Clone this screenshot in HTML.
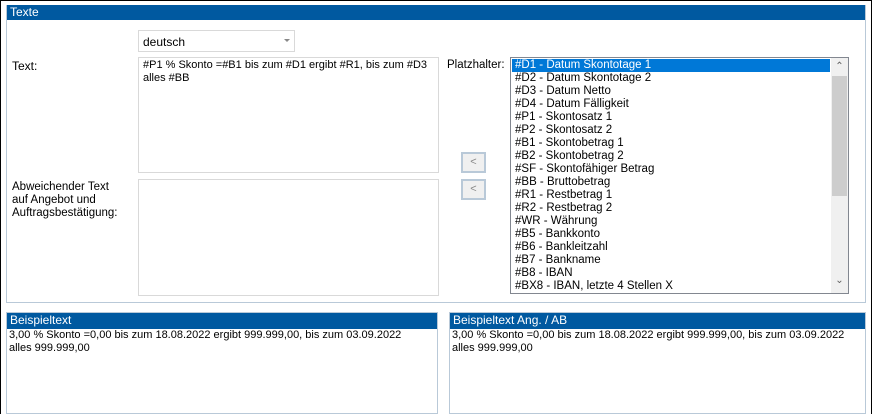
<!DOCTYPE html>
<html><head><style>
*{margin:0;padding:0;box-sizing:border-box}
body{width:872px;height:414px;background:#fff;font-family:"Liberation Sans",sans-serif;font-size:11px;color:#000;position:relative;overflow:hidden}
.a{position:absolute}
.hdr{background:#0059a0;color:#fff;padding-left:3px;line-height:15px;font-size:12px}
.box{border:1px solid #d9d9d9;background:#fff}
.li{height:13px;line-height:13px;padding-left:3px;white-space:nowrap;font-size:11.5px}
</style></head><body>
<div class="a" style="left:0;top:0;width:872px;height:414px;border:1px solid #000;border-bottom:none"></div>
<div class="a" style="left:6px;top:5px;width:860px;height:298px;border:1px solid #b9c9d8"></div>
<div class="a hdr" style="left:7px;top:5px;width:858px;height:15px">Texte</div>
<div class="a box" style="left:138px;top:30px;width:157px;height:22px;padding:4px 0 0 4px;font-size:12px">deutsch<span class="a" style="left:145px;top:8px;width:0;height:0;border-left:3px solid transparent;border-right:3px solid transparent;border-top:3px solid #888"></span></div>
<div class="a" style="left:12px;top:59px;font-size:12px">Text:</div>
<div class="a box" style="left:138px;top:57px;width:301px;height:116px;padding:1px 4px;line-height:13px;white-space:nowrap">#P1 % Skonto =#B1 bis zum #D1 ergibt #R1, bis zum #D3<br>alles #BB</div>
<div class="a" style="left:12px;top:181px;line-height:13px;font-size:11.5px">Abweichender Text<br>auf Angebot und<br>Auftragsbestätigung:</div>
<div class="a box" style="left:138px;top:179px;width:301px;height:117px"></div>
<div class="a" style="left:447px;top:59px;font-size:11.5px">Platzhalter:</div>
<div class="a" style="left:461px;top:152px;width:25px;height:21px;border:2px solid #b9c9d8;background:#f0f0f0;color:#888;text-align:center;line-height:17px">&lt;</div>
<div class="a" style="left:461px;top:179px;width:25px;height:21px;border:2px solid #b9c9d8;background:#f0f0f0;color:#888;text-align:center;line-height:17px">&lt;</div>
<div class="a" style="left:510px;top:57px;width:339px;height:237px;border:1px solid #828790;overflow:hidden">
<div class="a" style="left:1px;top:1px;width:318px">
<div class="li" style="background:#0078d7;color:#fff">#D1 - Datum Skontotage 1</div>
<div class="li">#D2 - Datum Skontotage 2</div>
<div class="li">#D3 - Datum Netto</div>
<div class="li">#D4 - Datum Fälligkeit</div>
<div class="li">#P1 - Skontosatz 1</div>
<div class="li">#P2 - Skontosatz 2</div>
<div class="li">#B1 - Skontobetrag 1</div>
<div class="li">#B2 - Skontobetrag 2</div>
<div class="li">#SF - Skontofähiger Betrag</div>
<div class="li">#BB - Bruttobetrag</div>
<div class="li">#R1 - Restbetrag 1</div>
<div class="li">#R2 - Restbetrag 2</div>
<div class="li">#WR - Währung</div>
<div class="li">#B5 - Bankkonto</div>
<div class="li">#B6 - Bankleitzahl</div>
<div class="li">#B7 - Bankname</div>
<div class="li">#B8 - IBAN</div>
<div class="li">#BX8 - IBAN, letzte 4 Stellen X</div>
</div>
<div class="a" style="left:320px;top:0;width:17px;height:235px;background:#f0f0f0">
<div class="a" style="left:0;top:3px;width:17px;text-align:center;color:#606060;font-size:10px">&#8963;</div>
<div class="a" style="left:1px;top:18px;width:15px;height:120px;background:#cdcdcd"></div>
<div class="a" style="left:0;top:217px;width:17px;text-align:center;color:#606060;font-size:10px">&#8964;</div>
</div></div>
<div class="a" style="left:6px;top:312px;width:432px;height:102px;border:1px solid #b9c9d8"></div>
<div class="a hdr" style="left:7px;top:313px;width:430px;height:16px">Beispieltext</div>
<div class="a" style="left:9px;top:329px;line-height:13px;white-space:nowrap">3,00 % Skonto =0,00 bis zum 18.08.2022 ergibt 999.999,00, bis zum 03.09.2022<br>alles 999.999,00</div>
<div class="a" style="left:449px;top:312px;width:417px;height:102px;border:1px solid #b9c9d8"></div>
<div class="a hdr" style="left:450px;top:313px;width:415px;height:16px">Beispieltext Ang. / AB</div>
<div class="a" style="left:452px;top:329px;line-height:13px;white-space:nowrap">3,00 % Skonto =0,00 bis zum 18.08.2022 ergibt 999.999,00, bis zum 03.09.2022<br>alles 999.999,00</div>
</body></html>
